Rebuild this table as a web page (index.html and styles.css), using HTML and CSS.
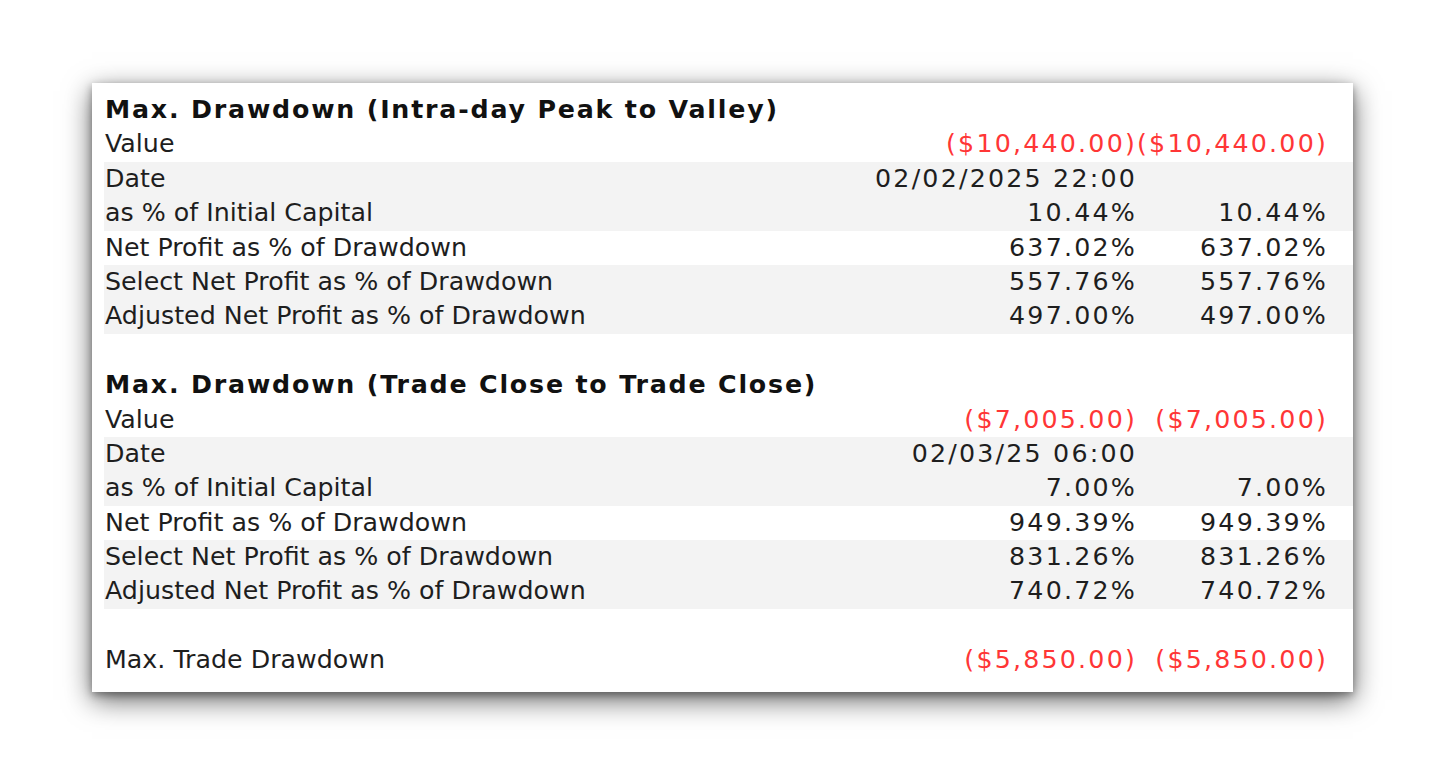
FILE: index.html
```html
<!DOCTYPE html>
<html>
<head>
<meta charset="utf-8">
<link rel="stylesheet" href="styles.css">
</head>
<body>
<div class="panel">
  <div class="row head"><span class="label">Max. Drawdown (Intra-day Peak to Valley)</span><span></span><span></span></div>
  <div class="row"><span class="label">Value</span><span class="num neg">($10,440.00)</span><span class="num neg">($10,440.00)</span></div>
  <div class="row alt"><span class="label">Date</span><span class="num">02/02/2025 22:00</span><span></span></div>
  <div class="row alt"><span class="label">as % of Initial Capital</span><span class="num">10.44%</span><span class="num">10.44%</span></div>
  <div class="row"><span class="label">Net Profit as % of Drawdown</span><span class="num">637.02%</span><span class="num">637.02%</span></div>
  <div class="row alt"><span class="label">Select Net Profit as % of Drawdown</span><span class="num">557.76%</span><span class="num">557.76%</span></div>
  <div class="row alt"><span class="label">Adjusted Net Profit as % of Drawdown</span><span class="num">497.00%</span><span class="num">497.00%</span></div>
  <div class="row"><span class="label"></span><span></span><span></span></div>
  <div class="row head"><span class="label">Max. Drawdown (Trade Close to Trade Close)</span><span></span><span></span></div>
  <div class="row"><span class="label">Value</span><span class="num neg">($7,005.00)</span><span class="num neg">($7,005.00)</span></div>
  <div class="row alt"><span class="label">Date</span><span class="num">02/03/25 06:00</span><span></span></div>
  <div class="row alt"><span class="label">as % of Initial Capital</span><span class="num">7.00%</span><span class="num">7.00%</span></div>
  <div class="row"><span class="label">Net Profit as % of Drawdown</span><span class="num">949.39%</span><span class="num">949.39%</span></div>
  <div class="row alt"><span class="label">Select Net Profit as % of Drawdown</span><span class="num">831.26%</span><span class="num">831.26%</span></div>
  <div class="row alt"><span class="label">Adjusted Net Profit as % of Drawdown</span><span class="num">740.72%</span><span class="num">740.72%</span></div>
  <div class="row"><span class="label"></span><span></span><span></span></div>
  <div class="row"><span class="label">Max. Trade Drawdown</span><span class="num neg">($5,850.00)</span><span class="num neg">($5,850.00)</span></div>
</div>
</body>
</html>
```

FILE: styles.css
```css
html, body {
  margin: 0;
  padding: 0;
  background: #ffffff;
}
body {
  box-sizing: border-box;
  min-height: 769px;
  padding: 83px 0 0 92px;
  font-family: "DejaVu Sans", Verdana, sans-serif;
  font-size: 25.3px;
  color: #1e1e1e;
}
.panel {
  width: 1261px;
  box-sizing: border-box;
  padding: 10px 0 14px 12px;
  background: #ffffff;
  box-shadow: 0 8px 26px rgba(0, 0, 0, 0.6), 0 3px 8px rgba(0, 0, 0, 0.35);
}
.row {
  display: grid;
  grid-template-columns: 1fr 300px 191px;
  padding-right: 25px;
  height: 34.4px;
  line-height: 34.4px;
  white-space: nowrap;
}
.row.alt {
  background: #f3f3f3;
}
.label {
  padding-left: 1px;
}
.num {
  text-align: right;
  letter-spacing: 2.2px;
}
.neg {
  color: #ff3636;
}
.head .label {
  font-weight: bold;
  color: #111111;
  letter-spacing: 1.8px;
}
```
